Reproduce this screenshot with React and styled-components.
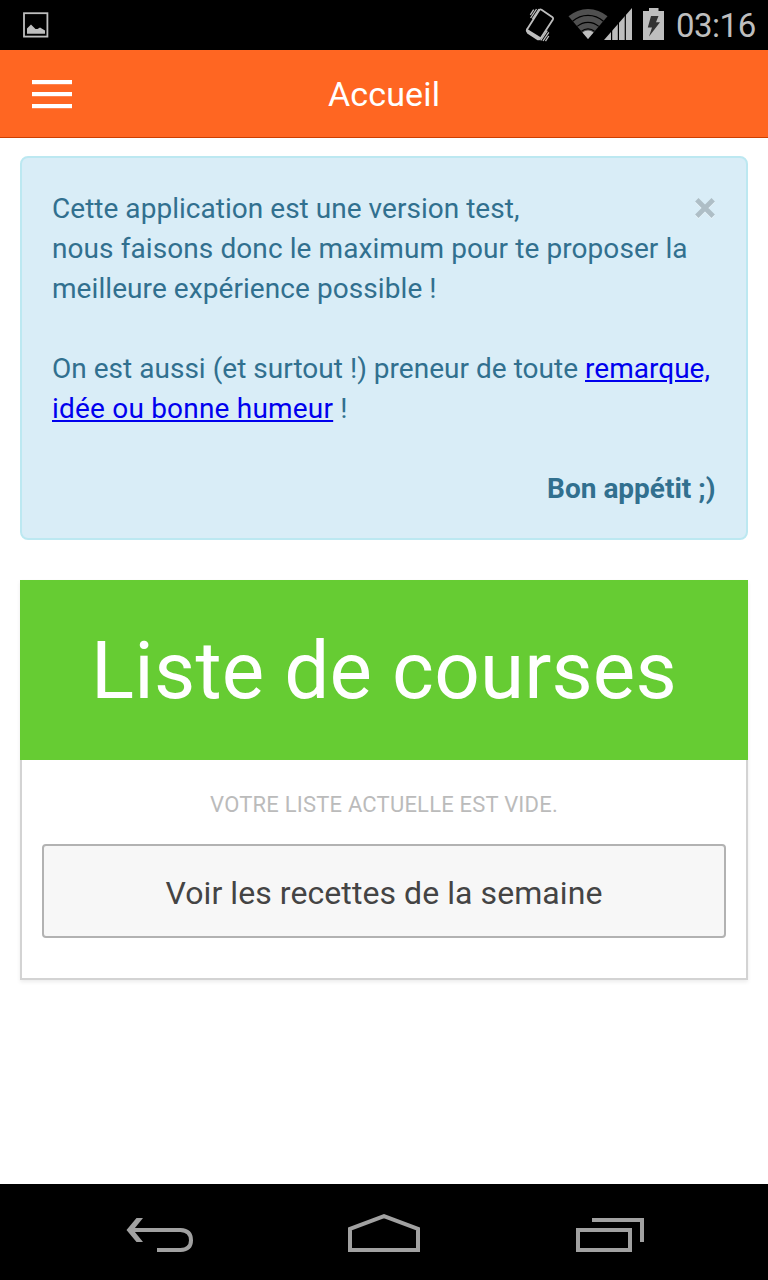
import React from "react";
import styled, { createGlobalStyle } from "styled-components";

const GlobalStyle = createGlobalStyle`
  * { box-sizing: border-box; }
  body { margin: 0; background: #fff; font-family: Roboto, "Liberation Sans", sans-serif; }
`;

const Screen = styled.div`
  width: 768px;
  height: 1280px;
  display: flex;
  flex-direction: column;
  overflow: hidden;
`;

const StatusBar = styled.header`
  height: 50px;
  flex: none;
  display: flex;
  align-items: center;
  justify-content: space-between;
  background: #000;
  color: #bebebe;
`;

const Glyph = styled.svg`
  display: block;
  flex: none;
  overflow: visible;
`;

const StatusGroup = styled.div`
  display: flex;
  align-items: center;
  height: 50px;
`;

const Clock = styled.span`
  width: 92px;
  font-size: 33px;
  line-height: 50px;
  padding-top: 2px;
  letter-spacing: -0.5px;
  white-space: nowrap;
`;

const TitleBar = styled.div`
  height: 88px;
  flex: none;
  display: grid;
  grid-template-columns: 104px 1fr 104px;
  align-items: center;
  background: #ff6622;
  border-bottom: 1px solid #cc3f02;
`;

const MenuButton = styled.button`
  display: flex;
  flex-direction: column;
  gap: 8px;
  padding: 0 32px 1px;
  border: 0;
  background: none;
`;

const MenuBar = styled.span`
  width: 40px;
  height: 4px;
  background: #fff;
  box-shadow: 0 1px 0 rgba(255, 255, 255, 0.2);
`;

const PageTitle = styled.h1`
  margin: 0;
  color: #fff;
  font-size: 34px;
  font-weight: 400;
  line-height: 88px;
  text-align: center;
  letter-spacing: ${(p) => p.$spacing}px;
`;

const Content = styled.main`
  flex: 1;
  padding: 18px 20px 0;
  display: flex;
  flex-direction: column;
  gap: 40px;
`;

const Notice = styled.section`
  position: relative;
  height: 384px;
  padding: 31px 30px 29px;
  background: #d9edf7;
  border: 2px solid #bce8f1;
  border-radius: 8px;
  color: #31708f;
  font-size: 28px;
  line-height: 40px;
`;

const Line = styled.div`
  min-height: 40px;
  white-space: nowrap;
  letter-spacing: ${(p) => p.$spacing || 0}px;
`;

const Signature = styled(Line)`
  padding-right: 0.5px;
  font-weight: 700;
  text-align: right;
`;

const Link = styled.a`
  color: #0000ee;
  text-decoration: underline;
`;

const CloseButton = styled.button`
  position: absolute;
  top: 40px;
  right: 31px;
  padding: 0;
  border: 0;
  background: none;
`;

const Card = styled.section`
  height: 400px;
  background: #fff;
  box-shadow: 0 2px 4px rgba(0, 0, 0, 0.08);
`;

const CardHeader = styled.h2`
  height: 180px;
  margin: 0;
  padding-top: 1px;
  background: #66cc33;
  color: #fff;
  font-size: 80px;
  font-weight: 400;
  line-height: 180px;
  text-align: center;
  white-space: nowrap;
  letter-spacing: ${(p) => p.$spacing}px;
`;

const CardBody = styled.div`
  height: 220px;
  padding: 25px 20px 40px;
  display: flex;
  flex-direction: column;
  gap: 19px;
  border: 2px solid #d3d3d3;
  border-top: 0;
`;

const EmptyText = styled.p`
  margin: 0;
  color: #bbb;
  font-size: 22px;
  line-height: 40px;
  text-align: center;
  letter-spacing: ${(p) => p.$spacing}px;
`;

const ActionButton = styled.button`
  height: 94px;
  padding: 4px 0 0;
  background: #f7f7f7;
  border: 2px solid #b2b2b2;
  border-radius: 4px;
  color: #444;
  font-family: inherit;
  font-size: 32px;
  letter-spacing: ${(p) => p.$spacing}px;
`;

const NavBar = styled.nav`
  height: 96px;
  flex: none;
  display: flex;
  justify-content: center;
  gap: 124px;
  background: #000;
`;

const PictureIcon = () => (
  <Glyph width="50" height="50" viewBox="0 0 50 50">
    <rect x="24" y="13.2" width="23.4" height="23.4" fill="none" stroke="#bebebe" strokeWidth="1.8" />
    <path d="M27 33.7V28.5L31 24.5L35.5 29L37.5 29L40 27.5L45 30.5V33.7Z" fill="#bebebe" />
  </Glyph>
);

const VibrateIcon = () => (
  <Glyph width="32" height="50" viewBox="524 0 32 50" fill="none" stroke="#bebebe">
    <path d="M541.5 9.7L552.5 17.3Q553.6 18.2 552.9 19.5L540.7 38.2Q539.7 39.7 538.3 38.8L527.5 31.8Q526.2 30.8 527 29.5L539.2 10.3Q540.2 8.9 541.5 9.7Z" strokeWidth="1.8" />
    <path d="M526.5 28.6L541 37.6L539.7 40.2L537.5 40.2L527.2 33.4Q525.3 31.5 526.5 28.6Z" fill="#bebebe" stroke="none" />
    <path d="M530.3 14.8L533.7 9.6M530.6 18L536.5 9M532.4 18.8L539 9M540.8 40.5L547.3 30.7M543 41L548.8 32.3M545.5 41.2L548.8 36" strokeWidth="1.3" />
  </Glyph>
);

const WifiIcon = () => (
  <Glyph width="48" height="50" viewBox="556 0 48 50">
    <path d="M568.5 16.3A30 30 0 0 1 607.5 16.3L588 39Z" fill="#505050" />
    <path d="M572.6 21.2A23 23 0 0 1 603.4 21.2M577.2 26.4A16.3 16.3 0 0 1 598.8 26.4M581.5 31.3A9.8 9.8 0 0 1 594.5 31.3" fill="none" stroke="#000" strokeWidth="1.2" />
    <path d="M582.5 32.6A8.5 8.5 0 0 1 593.5 32.6L588 39Z" fill="#bebebe" />
  </Glyph>
);

const SignalIcon = () => (
  <Glyph width="34" height="50" viewBox="604 0 34 50">
    <path d="M604 40L632 8V40Z" fill="#bebebe" />
    <path d="M611.6 20V41M618.4 14V41M625.3 8V41" stroke="#000" strokeWidth="1.2" />
  </Glyph>
);

const BatteryIcon = () => (
  <Glyph width="38" height="50" viewBox="638 0 38 50">
    <path d="M643 11H649V8H658.5V11H664V40H643Z" fill="#bebebe" />
    <path d="M651 16H658.5L656 22.3H660L649 36.5L652 27.5H647.8Z" fill="#333" />
  </Glyph>
);

const CloseIcon = () => (
  <Glyph width="20" height="20" viewBox="0 0 20 20">
    <path d="M1.8 1.8L18.2 18.2M18.2 1.8L1.8 18.2" stroke="#fff" strokeWidth="4.8" transform="translate(0 1)" opacity=".45" />
    <path d="M1.8 1.8L18.2 18.2M18.2 1.8L1.8 18.2" stroke="#aebec6" strokeWidth="4.8" />
  </Glyph>
);

const BackIcon = () => (
  <Glyph width="100" height="96" viewBox="110 1184 100 96" fill="none" stroke="#a1a1a1" strokeWidth="4">
    <path d="M132 1230H180.5Q191 1230.5 191 1240.2Q191 1249.5 180.5 1250H157" />
    <path d="M136.5 1218H143L133.3 1230L143 1242H136.5L126.5 1230Z" fill="#a1a1a1" stroke="none" />
  </Glyph>
);

const HomeIcon = () => (
  <Glyph width="100" height="96" viewBox="334 1184 100 96" fill="none" stroke="#a1a1a1" strokeWidth="4">
    <path d="M350 1250V1228.8L384 1216.2L418 1228.8V1250Z" />
  </Glyph>
);

const RecentsIcon = () => (
  <Glyph width="100" height="96" viewBox="558 1184 100 96" fill="none" stroke="#a1a1a1" strokeWidth="4">
    <path d="M578 1230H630V1250H578ZM592 1220H642V1242" />
  </Glyph>
);

export default function App() {
  return (
    <Screen>
      <GlobalStyle />
      <StatusBar>
        <PictureIcon />
        <StatusGroup>
          <VibrateIcon />
          <WifiIcon />
          <SignalIcon />
          <BatteryIcon />
          <Clock>03:16</Clock>
        </StatusGroup>
      </StatusBar>
      <TitleBar>
        <MenuButton aria-label="Menu">
          <MenuBar />
          <MenuBar />
          <MenuBar />
        </MenuButton>
        <PageTitle $spacing={0.15}>Accueil</PageTitle>
      </TitleBar>
      <Content>
        <Notice>
          <CloseButton aria-label="Fermer">
            <CloseIcon />
          </CloseButton>
          <Line $spacing={0.03}>Cette application est une version test,</Line>
          <Line $spacing={0.085}>nous faisons donc le maximum pour te proposer la</Line>
          <Line $spacing={0.07}>meilleure expérience possible !</Line>
          <Line />
          <Line $spacing={0.02}>
            On est aussi (et surtout !) preneur de toute <Link href="#">remarque,</Link>
          </Line>
          <Line $spacing={0.2}>
            <Link href="#">idée ou bonne humeur</Link> !
          </Line>
          <Line />
          <Signature>Bon appétit ;)</Signature>
        </Notice>
        <Card>
          <CardHeader $spacing={0.15}>Liste de courses</CardHeader>
          <CardBody>
            <EmptyText $spacing={0.21}>VOTRE LISTE ACTUELLE EST VIDE.</EmptyText>
            <ActionButton $spacing={0.07}>Voir les recettes de la semaine</ActionButton>
          </CardBody>
        </Card>
      </Content>
      <NavBar>
        <BackIcon />
        <HomeIcon />
        <RecentsIcon />
      </NavBar>
    </Screen>
  );
}
